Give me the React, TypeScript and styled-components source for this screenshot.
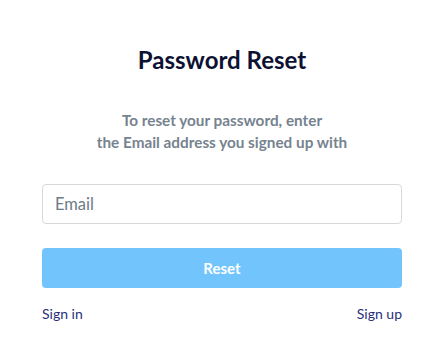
import styled, { createGlobalStyle } from "styled-components";

const GlobalStyle = createGlobalStyle`
  body {
    margin: 0;
    background: #ffffff;
    font-family: Lato, "Noto Sans", sans-serif;
  }
`;

const Page = styled.div`
  display: flex;
  justify-content: center;
  padding-top: 45px;
`;
const Form = styled.form`
  width: 360px;
  display: flex;
  flex-direction: column;
`;
const Title = styled.h1`
  margin: 0;
  font-size: 24px;
  line-height: 30px;
  font-weight: 700;
  color: #0d1233;
  text-align: center;
`;
const Subtitle = styled.p`
  margin: 34px 0 0;
  font-size: 15.3px;
  line-height: 22px;
  font-weight: 700;
  color: #76838f;
  text-align: center;
`;
const Input = styled.input`
  margin-top: 31px;
  height: 40px;
  box-sizing: border-box;
  border: 1px solid #d6d9dc;
  border-radius: 4px;
  padding: 0 12px;
  font-family: inherit;
  font-size: 16.5px;
  color: #333;
  outline: none;
  &::placeholder {
    color: #6d7b86;
  }
`;
const Button = styled.button`
  margin-top: 24px;
  height: 40px;
  border: none;
  border-radius: 4px;
  background: #72c5fc;
  color: #ffffff;
  font-family: inherit;
  font-size: 15px;
  font-weight: 700;
`;
const Links = styled.div`
  margin-top: 17px;
  display: flex;
  justify-content: space-between;
`;
const Link = styled.a`
  font-size: 14px;
  line-height: 18px;
  color: #27307a;
  text-decoration: none;
  cursor: pointer;
`;

export default function App() {
  return (
    <>
      <GlobalStyle />
      <Page>
        <Form onSubmit={(e) => e.preventDefault()}>
          <Title>Password Reset</Title>
          <Subtitle>
            To reset your password, enter
            <br />
            the Email address you signed up with
          </Subtitle>
          <Input type="email" placeholder="Email" />
          <Button type="submit">Reset</Button>
          <Links>
            <Link>Sign in</Link>
            <Link>Sign up</Link>
          </Links>
        </Form>
      </Page>
    </>
  );
}
